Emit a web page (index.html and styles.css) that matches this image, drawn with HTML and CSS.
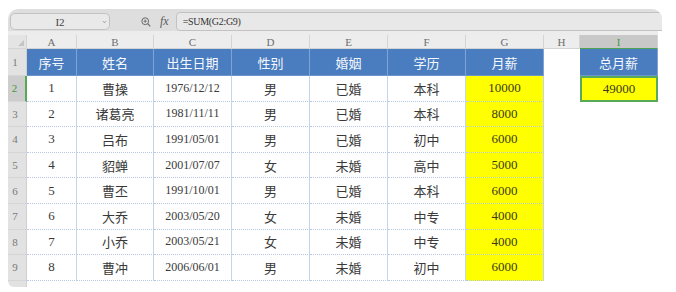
FILE: index.html
```html
<!DOCTYPE html>
<html lang="zh-CN">

<head>
    <meta charset="UTF-8" />
    <meta name="viewport" content="width=device-width, initial-scale=1.0" />
    <title>工资表</title>
    <link rel="stylesheet" href="styles.css">
</head>

<body>
    <div class="sheet">
        <!-- 编辑栏 -->
        <div class="toolbar">
            <div class="name-box">
                <span>I2</span>
                <svg class="caret" width="5" height="4" viewBox="0 0 5 4"><path d="M1 1.2 L2.5 2.7 L4 1.2" fill="none" stroke="#8a8a8a" stroke-width="0.9"/></svg>
            </div>
            <svg class="zoom-icon" width="10" height="10" viewBox="0 0 10 10">
                <circle cx="4.2" cy="4.2" r="3.4" fill="none" stroke="#6a6a6a" stroke-width="1"/>
                <path d="M2.6 4.2 H5.8 M4.2 2.6 V5.8" stroke="#6a6a6a" stroke-width="0.9"/>
                <path d="M6.7 6.7 L9.3 9.3" stroke="#6a6a6a" stroke-width="1.2"/>
            </svg>
            <span class="fx">fx</span>
            <div class="formula">=SUM(G2:G9)</div>
        </div>

        <!-- 表格 -->
        <div class="grid">
            <div class="gap-row"></div>

            <div class="ch corner"><svg width="6" height="6" viewBox="0 0 6 6"><path d="M6 0 V6 H0 Z" fill="#c4c4c4"/></svg></div>
            <div class="ch">A</div>
            <div class="ch">B</div>
            <div class="ch">C</div>
            <div class="ch">D</div>
            <div class="ch">E</div>
            <div class="ch">F</div>
            <div class="ch">G</div>
            <div class="ch">H</div>
            <div class="ch active">I</div>

            <div class="rh">1</div>
            <div class="hd">序号</div>
            <div class="hd">姓名</div>
            <div class="hd">出生日期</div>
            <div class="hd">性别</div>
            <div class="hd">婚姻</div>
            <div class="hd">学历</div>
            <div class="hd">月薪</div>
            <div class="blank"></div>
            <div class="hd">总月薪</div>

            <div class="rh active">2</div>
            <div class="c">1</div>
            <div class="c">曹操</div>
            <div class="c dt">1976/12/12</div>
            <div class="c">男</div>
            <div class="c">已婚</div>
            <div class="c">本科</div>
            <div class="c y">10000</div>
            <div class="blank"></div>
            <div class="c y selected">49000</div>

            <div class="rh">3</div>
            <div class="c">2</div>
            <div class="c">诸葛亮</div>
            <div class="c dt">1981/11/11</div>
            <div class="c">男</div>
            <div class="c">已婚</div>
            <div class="c">本科</div>
            <div class="c y">8000</div>
            <div class="blank"></div>
            <div class="blank"></div>

            <div class="rh">4</div>
            <div class="c">3</div>
            <div class="c">吕布</div>
            <div class="c dt">1991/05/01</div>
            <div class="c">男</div>
            <div class="c">已婚</div>
            <div class="c">初中</div>
            <div class="c y">6000</div>
            <div class="blank"></div>
            <div class="blank"></div>

            <div class="rh">5</div>
            <div class="c">4</div>
            <div class="c">貂蝉</div>
            <div class="c dt">2001/07/07</div>
            <div class="c">女</div>
            <div class="c">未婚</div>
            <div class="c">高中</div>
            <div class="c y">5000</div>
            <div class="blank"></div>
            <div class="blank"></div>

            <div class="rh">6</div>
            <div class="c">5</div>
            <div class="c">曹丕</div>
            <div class="c dt">1991/10/01</div>
            <div class="c">男</div>
            <div class="c">已婚</div>
            <div class="c">本科</div>
            <div class="c y">6000</div>
            <div class="blank"></div>
            <div class="blank"></div>

            <div class="rh">7</div>
            <div class="c">6</div>
            <div class="c">大乔</div>
            <div class="c dt">2003/05/20</div>
            <div class="c">女</div>
            <div class="c">未婚</div>
            <div class="c">中专</div>
            <div class="c y">4000</div>
            <div class="blank"></div>
            <div class="blank"></div>

            <div class="rh">8</div>
            <div class="c">7</div>
            <div class="c">小乔</div>
            <div class="c dt">2003/05/21</div>
            <div class="c">女</div>
            <div class="c">未婚</div>
            <div class="c">中专</div>
            <div class="c y">4000</div>
            <div class="blank"></div>
            <div class="blank"></div>

            <div class="rh">9</div>
            <div class="c">8</div>
            <div class="c">曹冲</div>
            <div class="c dt">2006/06/01</div>
            <div class="c">男</div>
            <div class="c">未婚</div>
            <div class="c">初中</div>
            <div class="c y">6000</div>
            <div class="blank"></div>
            <div class="blank"></div>

            <div class="rh tail"></div>
        </div>
    </div>
</body>

</html>
```

FILE: styles.css
```css
body {
    margin: 0;
    background: #fff;
    font-family: "Liberation Serif", "Noto Sans CJK SC", serif;
    color: #333;
}

.sheet {
    margin: 9px 0 0 8px;
    width: 654px;
}

/* 编辑栏 */
.toolbar {
    height: 22px;
    box-sizing: border-box;
    padding: 3px 0 0 2px;
    background: #dedede;
    border-radius: 10px 10px 0 0;
    overflow: hidden;
    display: flex;
    align-items: flex-start;
}

.name-box {
    margin-top: 1px;
    width: 100px;
    height: 17px;
    box-sizing: border-box;
    border: 1px solid #c2c2c2;
    border-radius: 5px;
    background: #e9e9e9;
    display: flex;
    align-items: center;
    justify-content: center;
    position: relative;
    font-size: 11px;
    color: #444;
}

.name-box .caret {
    position: absolute;
    right: 2px;
    top: 6px;
}

.zoom-icon {
    margin: 5px 0 0 31px;
}

.fx {
    margin: 2px 0 0 9px;
    font-style: italic;
    font-size: 12px;
    color: #5a5a5a;
    line-height: 14px;
}

.formula {
    margin: 0 -6px 0 7px;
    flex: 1;
    height: 19px;
    box-sizing: border-box;
    border: 1px solid #c2c2c2;
    border-radius: 4px 0 0 4px;
    background: #e8e8e8;
    padding-left: 6px;
    font-size: 10px;
    letter-spacing: -0.3px;
    line-height: 17px;
    color: #333;
}

/* 表格 */
.grid {
    width: 650px;
    display: grid;
    grid-template-columns: 19px 50px 77px 78px 78px 78px 78px 78px 36px 78px;
    grid-template-rows: 4px 14px 27px repeat(8, 25.6px) 6px;
}

.grid > div {
    box-sizing: border-box;
    display: flex;
    align-items: center;
    justify-content: center;
}

.gap-row {
    grid-column: 1 / -1;
    background: #ececec;
}

/* 列标 */
.ch {
    background: #ededed;
    border-right: 1px solid #d4d4d4;
    border-bottom: 1px solid #d4d4d4;
    font-size: 11px;
    color: #6e6e6e;
}

.ch.corner {
    justify-content: flex-end;
    align-items: flex-end;
    padding: 0 2px 2px 0;
    background: #e4e4e4;
}

.ch.active {
    background: #c8c8c8;
    color: #3f9a3f;
    border-bottom: 1px solid #4fa34f;
}

/* 行号 */
.rh {
    background: #e2e2e2;
    border-right: 1px solid #d0d0d0;
    border-bottom: 1px solid #d6d6d6;
    padding-right: 4px;
    font-size: 11px;
    color: #7a7a7a;
}

.rh.active {
    background: #cdcdcd;
    color: #3f9a3f;
    border-right: 2px solid #55a955;
}

.rh.tail {
    border-bottom: none;
    border-bottom-left-radius: 10px;
}

/* 表头 */
.hd {
    background: #4a7dbf;
    border-right: 1px solid #7fa3d3;
    border-bottom: 1px solid #6d95c9;
    color: #f4f7fb;
    font-size: 13px;
}

/* 数据 */
.c {
    background: #fff;
    border-right: 1px solid #c4d5ee;
    border-bottom: 1px dotted #b5c9e7;
    font-size: 13px;
    color: #3a3a3a;
}

.c.dt {
    font-size: 12px;
}

.c.y {
    background: #ffff00;
    color: #3a3a1a;
}

.c.selected {
    box-shadow: inset 0 0 0 2px #58a958;
    border: none;
}

.blank {
    background: #fff;
}
```
